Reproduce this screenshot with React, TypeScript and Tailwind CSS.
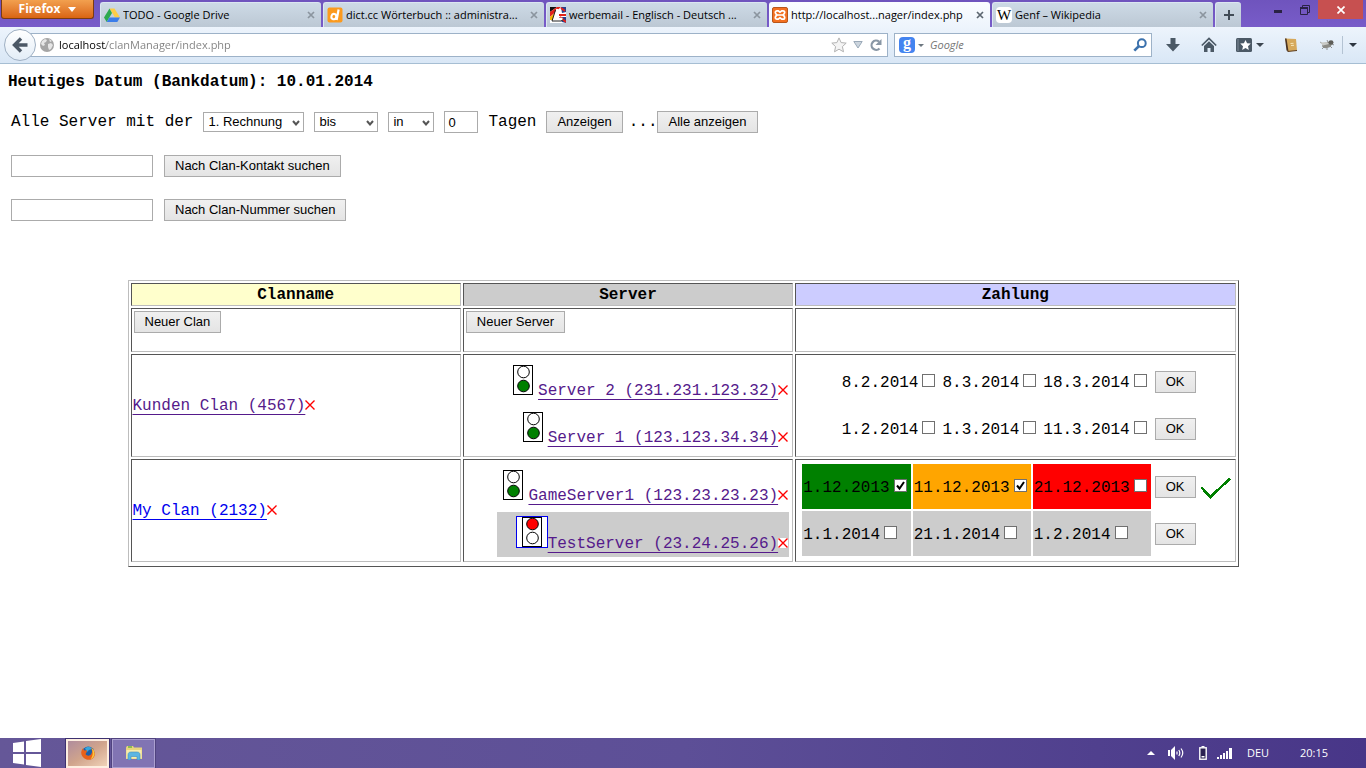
import type { ReactNode } from "react";

const UI = "font-['Open_Sans','Noto_Sans',sans-serif]";
const ARIAL = "font-['Liberation_Sans',Arial,sans-serif]";

/* ---------- favicons ---------- */

function DriveIcon() {
  return (
    <svg viewBox="0 0 16 16" className="size-4 shrink-0" aria-hidden="true">
      <path d="M5.5 1.5h5L16 10.5h-5z" fill="#fccd48" />
      <path d="M5.5 1.5 8 6 2.7 15 0 10.5z" fill="#2da94f" />
      <path d="M5.3 10.5H16L13.3 15H2.7z" fill="#3b7de9" />
    </svg>
  );
}

function DictIcon() {
  return (
    <svg viewBox="0 0 16 16" className="size-4 shrink-0" aria-hidden="true">
      <rect x="0.5" y="0.5" width="15" height="15" rx="2" fill="#fb9a1e" />
      <ellipse cx="6.8" cy="9.6" rx="2.4" ry="2.7" fill="none" stroke="#fff" strokeWidth="2" transform="rotate(15 6.8 9.6)" />
      <path d="M11.6 2.5 9.6 13" stroke="#fff" strokeWidth="2.2" />
    </svg>
  );
}

function LeoIcon() {
  return (
    <svg viewBox="0 0 16 16" className="size-4 shrink-0" aria-hidden="true">
      <rect width="16" height="16" fill="#fff" />
      <path d="M0 0h7L0 5z" fill="#111" />
      <path d="M7 0h4L0 10V5z" fill="#e2231a" />
      <path d="M0 10 5 6 3 13H0z" fill="#f6b800" />
      <path d="M11 0h5v5l-4 1z" fill="#25408f" />
      <path d="M9 10h7v6l-4-1z" fill="#25408f" />
      <path d="M9 8h7M11 1l4 3M10 10l6 5" stroke="#e2231a" strokeWidth="2" />
      <path d="M7.500 2 4.500 12h8" stroke="#fff" strokeWidth="2.600" fill="none" />
      <path d="M5.500 3 2 14h9.500l1.500-1.500" stroke="#222" strokeWidth="1" fill="none" />
    </svg>
  );
}

function XamppIcon() {
  return (
    <svg viewBox="0 0 16 16" className="size-4 shrink-0" aria-hidden="true">
      <rect x="0.5" y="0.5" width="15" height="15" rx="1.5" fill="#f37021" stroke="#b8561b" />
      <path
        d="M5 3.800h1.200L8 5.200l1.800-1.400H11c1 0 1.700.7 1.700 1.700 0 1-.7 1.700-1.700 2.500 1 .800 1.700 1.500 1.700 2.500s-.7 1.700-1.700 1.700H9.800L8 10.800l-1.800 1.400H5c-1 0-1.700-.7-1.700-1.700 0-1 .7-1.700 1.700-2.500-1-.800-1.700-1.500-1.700-2.500S4 3.800 5 3.800z"
        fill="none"
        stroke="#fff"
        strokeWidth="1.700"
      />
      <path d="M5.500 8h5" stroke="#fff" strokeWidth="1.500" />
    </svg>
  );
}

function WikipediaIcon() {
  return (
    <span className="flex size-4 shrink-0 items-center justify-center rounded-sm bg-white font-['Liberation_Serif',serif] text-[15px] leading-4 text-black">
      W
    </span>
  );
}

/* ---------- browser chrome ---------- */

type TabProps = { icon: ReactNode; title: string; active?: boolean };

function Tab({ icon, title, active }: TabProps) {
  return (
    <div
      className={
        active
          ? "flex h-[25px] w-[221px] min-w-0 items-center rounded-t-[3px] bg-linear-to-b from-[#fbfdff] to-[#edf4fc] px-[3px]"
          : "flex h-[25px] w-[221px] min-w-0 items-center rounded-t-[3px] border-t border-l border-[#dbe6f1] bg-linear-to-b from-[#cddae6] to-[#bcc8d4] px-[3px]"
      }
    >
      {icon}
      <button type="button" className="ml-[3px] min-w-0 flex-1 truncate text-left text-[11px] leading-5 text-black">
        {title}
      </button>
      <button type="button" aria-label="Tab schließen" className="flex w-[14px] shrink-0 justify-center">
        <svg viewBox="0 0 8 8" className="size-2" aria-hidden="true">
          <path d="M1 1l6 6M7 1 1 7" stroke={active ? "#5c6670" : "#8b959f"} strokeWidth="1.7" />
        </svg>
      </button>
    </div>
  );
}

function TabStrip() {
  return (
    <div className="flex h-[27px] items-start bg-linear-to-b from-[#6f54bd] to-[#785cc9]">
      <button
        type="button"
        className="mr-[6px] ml-px flex h-[19px] w-[93px] shrink-0 items-center justify-center gap-2 rounded-b-[3px] border border-t-0 border-[#7a3b12] bg-linear-to-b from-[#f2a04e] to-[#d96410] text-[12px] leading-4 font-bold text-white"
      >
        Firefox
        <svg viewBox="0 0 8 5" className="h-[5px] w-2" aria-hidden="true">
          <path d="M0 0h8L4 5z" fill="#fff" />
        </svg>
      </button>
      <div className="flex min-w-0 items-end gap-[2px] self-end">
        <Tab icon={<DriveIcon />} title="TODO - Google Drive" />
        <Tab icon={<DictIcon />} title="dict.cc Wörterbuch :: administra..." />
        <Tab icon={<LeoIcon />} title="werbemail - Englisch - Deutsch ..." />
        <Tab icon={<XamppIcon />} title="http://localhost...nager/index.php" active />
        <Tab icon={<WikipediaIcon />} title="Genf – Wikipedia" />
        <button
          type="button"
          aria-label="Neuer Tab"
          className="flex h-[25px] w-[26px] shrink-0 items-center justify-center rounded-t-[3px] border-t border-l border-[#dbe6f1] bg-linear-to-b from-[#cddae6] to-[#bcc8d4]"
        >
          <svg viewBox="0 0 10 10" className="size-[10px]" aria-hidden="true">
            <path d="M5 0v10M0 5h10" stroke="#414c57" strokeWidth="2" />
          </svg>
        </button>
      </div>
      <div className="mr-[3px] ml-auto flex h-[19px] shrink-0 items-center">
        <button type="button" aria-label="Minimieren" className="flex h-full w-[26px] items-center justify-center pt-1">
          <svg viewBox="0 0 8 3" className="h-[3px] w-2" aria-hidden="true">
            <path d="M0 0h8v3H0z" fill="#2a2245" />
          </svg>
        </button>
        <button type="button" aria-label="Verkleinern" className="flex h-full w-[27px] items-center justify-center">
          <svg viewBox="0 0 10 10" className="size-[10px]" aria-hidden="true">
            <path d="M2.5 2V.5h7v7H8M.5 2.5h7v7h-7z" fill="none" stroke="#2a2245" />
            <path d="M0 3h8" stroke="#2a2245" strokeWidth="2" />
          </svg>
        </button>
        <button type="button" aria-label="Schließen" className="flex h-full w-[45px] items-center justify-center bg-[#c75050]">
          <svg viewBox="0 0 8 8" className="size-2" aria-hidden="true">
            <path d="M.5.5l7 7M7.5.5l-7 7" stroke="#fff" strokeWidth="1.7" />
          </svg>
        </button>
      </div>
    </div>
  );
}

function NavBar() {
  return (
    <div className="flex h-[37px] items-center border-b border-[#a6bed3] bg-linear-to-b from-[#edf4fc] to-[#d9e7f6] pl-1">
      <button
        type="button"
        aria-label="Zurück"
        className="z-10 flex size-8 shrink-0 items-center justify-center rounded-full border border-[#9fb0c3] bg-linear-to-b from-white to-[#e3edf7]"
      >
        <svg viewBox="0 0 16 16" className="size-4" aria-hidden="true">
          <path d="M9 1.5 2.5 8 9 14.5M3 8h12.5" fill="none" stroke="#4c5866" strokeWidth="3.4" />
        </svg>
      </button>
      <div className="-ml-2 flex h-6 min-w-0 flex-1 items-center border border-[#9db2c8] bg-white pr-1 pl-[11px]">
        <svg viewBox="0 0 14 14" className="size-[14px] shrink-0" aria-hidden="true">
          <circle cx="7" cy="7" r="7" fill="#a5a5a5" />
          <path d="M2 3l3-2 2 1-1 2-2 1 1 2-2 1-2-2zM8 6l3-1 2 2-2 4-2 1-1-3zM9 1l3 2-2 1z" fill="#e6e6e6" />
        </svg>
        <input
          type="text"
          aria-label="Adresse"
          defaultValue="localhost/clanManager/index.php"
          className="ml-[5px] min-w-0 flex-1 bg-[linear-gradient(90deg,#000_47px,#808080_47px)] bg-clip-text text-[11px] leading-5 text-transparent outline-none"
        />
        <button type="button" aria-label="Lesezeichen" className="shrink-0">
          <svg viewBox="0 0 16 16" className="size-4" aria-hidden="true">
            <path
              d="M8 .9l2.1 4.7 5.1.5-3.8 3.5 1.1 5.2L8 12.200 3.500 14.800l1.100-5.200L.8 6.100l5.100-.5z"
              fill="#f4f4f4"
              stroke="#b3b3b3"
            />
          </svg>
        </button>
        <button type="button" aria-label="Verlauf" className="ml-[6px] shrink-0">
          <svg viewBox="0 0 10 8" className="h-2 w-[10px]" aria-hidden="true">
            <path d="M.8.5h8.400L5 7z" fill="#ccd5de" stroke="#9aa9b8" />
          </svg>
        </button>
        <button type="button" aria-label="Neu laden" className="ml-[6px] shrink-0">
          <svg viewBox="0 0 14 14" className="size-[14px]" aria-hidden="true">
            <path d="M10.500 10.400A4.600 4.600 0 1 1 10 3.600" fill="none" stroke="#8997a5" strokeWidth="2.200" />
            <path d="M12.500 1v6h-6z" fill="#8997a5" />
          </svg>
        </button>
      </div>
      <div className="ml-[6px] flex h-6 w-[258px] min-w-0 items-center border border-[#9db2c8] bg-white pr-1 pl-1">
        <span className="flex size-4 shrink-0 items-start justify-center overflow-hidden rounded-sm bg-[#4484f0] font-['Liberation_Serif',serif] text-[16px] leading-3 font-bold text-white">
          g
        </span>
        <svg viewBox="0 0 6 3" className="ml-[3px] h-[3px] w-[6px] shrink-0" aria-hidden="true">
          <path d="M0 0h6L3 3z" fill="#6d7780" />
        </svg>
        <input
          type="search"
          aria-label="Suche"
          placeholder="Google"
          className="ml-[6px] min-w-0 flex-1 text-[11px] leading-5 italic outline-none placeholder:text-[#757575]"
        />
        <button type="button" aria-label="Suchen" className="shrink-0">
          <svg viewBox="0 0 14 14" className="size-[14px]" aria-hidden="true">
            <circle cx="8.800" cy="5.200" r="3.900" fill="none" stroke="#3c72ad" strokeWidth="2" />
            <path d="M6 8 1.300 12.700" stroke="#3c72ad" strokeWidth="2.600" />
          </svg>
        </button>
      </div>
      <div className="ml-3 flex shrink-0 items-center pr-[9px]">
        <button type="button" aria-label="Downloads" className="flex w-[18px] justify-center">
          <svg viewBox="0 0 14 14" className="size-[14px]" aria-hidden="true">
            <path d="M4.500 0h5v6H14l-7 7.500L0 6h4.500z" fill="#4b5966" />
          </svg>
        </button>
        <button type="button" aria-label="Startseite" className="ml-[18px] flex w-[18px] justify-center">
          <svg viewBox="0 0 16 16" className="size-4" aria-hidden="true">
            <path d="M.8 8.500 8 1.500l7.200 7" fill="none" stroke="#4b5966" strokeWidth="1.700" />
            <path d="M3 9l5-4.800L13 9v6H9.500v-4h-3v4H3z" fill="#4b5966" />
          </svg>
        </button>
        <button type="button" aria-label="Lesezeichen verwalten" className="ml-[18px] flex items-center gap-1">
          <svg viewBox="0 0 16 14" className="h-[14px] w-4" aria-hidden="true">
            <rect width="16" height="14" rx="1.500" fill="#4b5966" />
            <path d="M2 1v12" stroke="#7d8996" strokeWidth="1" />
            <path d="M9.500 2l1.600 3.300 3.700.3-2.800 2.600.8 3.800-3.300-2-3.300 2 .8-3.800L4.200 5.600l3.700-.3z" fill="#fff" />
          </svg>
          <svg viewBox="0 0 8 4" className="h-1 w-2" aria-hidden="true">
            <path d="M0 0h8L4 4z" fill="#3c4650" />
          </svg>
        </button>
        <button type="button" aria-label="Wörterbuch" className="ml-[19px] flex w-4 justify-center">
          <svg viewBox="0 0 14 14" className="size-[14px]" aria-hidden="true">
            <path d="M1 .5 12 1l1 11.500-9 1z" fill="#d6a95c" />
            <path d="M1 .5 2.500.6 4.500 13.300 2.500 12.500z" fill="#4a3220" />
            <path d="M3.500 13.500l9.500-1" stroke="#5a3b1c" />
            <path d="M6.500 5.500l3-.2M7 7.500l3-.2" stroke="#f7e6b8" />
          </svg>
        </button>
        <button type="button" aria-label="Firebug" className="ml-5 flex w-4 justify-center">
          <svg viewBox="0 0 16 14" className="h-[14px] w-4" aria-hidden="true">
            <path d="M5 9l-2 2M8 9.500V12M11 8l2 2M4 6 1 4M9 4 8 2M13 6l2 1" stroke="#6a6a66" strokeWidth="0.700" />
            <ellipse cx="8" cy="7" rx="5" ry="3" fill="#8b8b85" transform="rotate(-18 8 7)" />
            <ellipse cx="12" cy="4.500" rx="2.500" ry="2.200" fill="#5d5d58" />
            <path d="M1 4.500l7-.500 2 2-6 1.500z" fill="#c9cac6" />
          </svg>
        </button>
        <span className="ml-[7px] h-[18px] w-px bg-[#b4c3d3]" />
        <button type="button" aria-label="Mehr" className="ml-[6px]">
          <svg viewBox="0 0 8 4" className="h-1 w-2" aria-hidden="true">
            <path d="M0 0h8L4 4z" fill="#2d3640" />
          </svg>
        </button>
      </div>
    </div>
  );
}

/* ---------- page controls ---------- */

function Button({ children, type = "button" }: { children: ReactNode; type?: "button" | "submit" }) {
  return (
    <button
      type={type}
      className={`${ARIAL} h-[22px] shrink-0 border border-[#ababab] bg-linear-to-b from-[#f0f0f0] to-[#e4e4e4] px-[10px] text-[13px] leading-5 whitespace-nowrap text-black`}
    >
      {children}
    </button>
  );
}

function Select({ label, options, width }: { label: string; options: string[]; width: string }) {
  return (
    <span className={`relative flex h-5 ${width}`}>
      <select
        aria-label={label}
        className={`${ARIAL} w-full appearance-none border border-[#ababab] bg-white pr-3 pl-1 text-[13px] leading-4 text-black`}
      >
        {options.map((o) => (
          <option key={o}>{o}</option>
        ))}
      </select>
      <svg viewBox="0 0 8 6" className="pointer-events-none absolute top-2 right-1 h-[6px] w-2" aria-hidden="true">
        <path d="M1 1l3 3.500L7 1" fill="none" stroke="#555" strokeWidth="2" />
      </svg>
    </span>
  );
}

function TextBox({ label, width, value }: { label: string; width: string; value?: string }) {
  return (
    <input
      type="text"
      aria-label={label}
      defaultValue={value}
      className={`${ARIAL} h-[22px] border border-[#ababab] bg-white px-[3px] text-[13px] leading-5 text-black ${width}`}
    />
  );
}

function DeleteMark() {
  return (
    <button type="button" aria-label="Löschen" className="inline-block align-baseline">
      <svg viewBox="0 0 10 10" className="size-[10px] bg-white" aria-hidden="true">
        <path d="M.500.500l9 9M9.500.500l-9 9" stroke="#f00" strokeWidth="1.400" />
      </svg>
    </button>
  );
}

function TrafficLight({ on }: { on: "green" | "red" }) {
  return (
    <svg
      viewBox="0 0 30 30"
      className={on === "red" ? "box-content inline size-[30px] border border-[#00e] bg-white align-baseline" : "inline size-[30px] align-baseline"}
      role="img"
      aria-label={on === "red" ? "Rot" : "Grün"}
    >
      <rect x="5.500" y="0.500" width="19" height="29" fill="#fff" stroke="#000" />
      <circle cx="15.500" cy="7" r="5.800" fill={on === "red" ? "#f00" : "#fff"} stroke="#000" />
      <circle cx="15.500" cy="21" r="5.800" fill={on === "green" ? "#008000" : "#fff"} stroke="#000" />
    </svg>
  );
}

function TextLink({ children, visited = true }: { children: ReactNode; visited?: boolean }) {
  return (
    <a
      href="#"
      className={
        visited
          ? "text-[#551a8b] underline decoration-1 underline-offset-[4px] [text-decoration-skip-ink:none]"
          : "text-[#0000ee] underline decoration-1 underline-offset-[4px] [text-decoration-skip-ink:none]"
      }
    >
      {children}
    </a>
  );
}

type Server = { name: string; light: "green" | "red"; highlight?: boolean };

function ServerTable({ servers }: { servers: Server[] }) {
  return (
    <table className="ml-auto border-separate border-spacing-[2px]">
      <tbody>
        {servers.map((s) => (
          <tr key={s.name} className={s.highlight ? "bg-[#cccccc]" : ""}>
            <td className="h-[45px] p-px text-right align-middle whitespace-nowrap">
              <TrafficLight on={s.light} />
              <TextLink>{s.name}</TextLink>
              <DeleteMark />
            </td>
          </tr>
        ))}
      </tbody>
    </table>
  );
}

type Due = { date: string; bg?: string; checked?: boolean };

function DateCell({ due }: { due: Due }) {
  return (
    <td className={`h-[45px] px-px pt-[3px] pb-px align-middle whitespace-nowrap ${due.bg ?? ""}`}>
      <label>
        {due.date}
        <span className="relative mr-[3px] ml-1 inline-flex">
          <input
            type="checkbox"
            defaultChecked={due.checked}
            className="peer size-[13px] appearance-none border border-[#707070] bg-white"
          />
          <svg
            viewBox="0 0 13 13"
            className="pointer-events-none absolute top-0 left-0 hidden size-[13px] peer-checked:block"
            aria-hidden="true"
          >
            <path d="M3 6.500l2.500 3L10 3" fill="none" stroke="#000" strokeWidth="2" />
          </svg>
        </span>
      </label>
    </td>
  );
}

function PaymentTable({ rows }: { rows: { dues: Due[]; done?: boolean }[] }) {
  return (
    <table className="mb-px ml-auto border-separate border-spacing-[2px]">
      <tbody>
        {rows.map((r) => (
          <tr key={r.dues[0].date}>
            {r.dues.map((d) => (
              <DateCell key={d.date} due={d} />
            ))}
            <td className="px-[2px] py-px">
              <span className="flex">
                <Button type="submit">OK</Button>
              </span>
            </td>
            <td className="w-8 p-px">
              {r.done && (
                <svg viewBox="0 0 30 30" className="size-[30px]" shapeRendering="crispEdges" role="img" aria-label="Bezahlt">
                  <path d="M.500 15.500 9.500 25 29 6.500" fill="none" stroke="#008000" strokeWidth="2.600" />
                </svg>
              )}
            </td>
          </tr>
        ))}
      </tbody>
    </table>
  );
}

const CELL = "border border-t-[#555] border-l-[#555] border-r-[#bdbdbd] border-b-[#bdbdbd] p-px";

function ClanTable() {
  return (
    <table className="mx-auto mt-[59px] w-full max-w-[1111px] table-fixed border-separate border-spacing-[2px] border border-t-[#bdbdbd] border-r-[#555] border-b-[#555] border-l-[#bdbdbd] pb-[2px]">
      <colgroup>
        <col className="w-[30%]" />
        <col className="w-[30%]" />
        <col className="w-[40%]" />
      </colgroup>
      <thead>
        <tr>
          <th className={`${CELL} h-[23px] bg-[#ffffcc]`}>Clanname</th>
          <th className={`${CELL} h-[23px] bg-[#cccccc]`}>Server</th>
          <th className={`${CELL} h-[23px] bg-[#ccccff]`}>Zahlung</th>
        </tr>
      </thead>
      <tbody>
        <tr>
          <td className={`${CELL} h-[44px] align-top`}>
            <div className="m-px flex">
              <Button>Neuer Clan</Button>
            </div>
          </td>
          <td className={`${CELL} h-[44px] align-top`}>
            <div className="m-px flex">
              <Button>Neuer Server</Button>
            </div>
          </td>
          <td className={`${CELL} h-[44px]`} />
        </tr>
        <tr>
          <td className={`${CELL} h-[103px]`}>
            <TextLink>Kunden Clan (4567)</TextLink>
            <DeleteMark />
          </td>
          <td className={`${CELL} h-[103px]`}>
            <ServerTable
              servers={[
                { name: "Server 2 (231.231.123.32)", light: "green" },
                { name: "Server 1 (123.123.34.34)", light: "green" },
              ]}
            />
          </td>
          <td className={`${CELL} h-[103px]`}>
            <PaymentTable
              rows={[
                { dues: [{ date: "8.2.2014" }, { date: "8.3.2014" }, { date: "18.3.2014" }] },
                { dues: [{ date: "1.2.2014" }, { date: "1.3.2014" }, { date: "11.3.2014" }] },
              ]}
            />
          </td>
        </tr>
        <tr>
          <td className={`${CELL} h-[103px]`}>
            <TextLink visited={false}>My Clan (2132)</TextLink>
            <DeleteMark />
          </td>
          <td className={`${CELL} h-[103px]`}>
            <ServerTable
              servers={[
                { name: "GameServer1 (123.23.23.23)", light: "green" },
                { name: "TestServer (23.24.25.26)", light: "red", highlight: true },
              ]}
            />
          </td>
          <td className={`${CELL} h-[103px]`}>
            <PaymentTable
              rows={[
                {
                  dues: [
                    { date: "1.12.2013", bg: "bg-[#008000]", checked: true },
                    { date: "11.12.2013", bg: "bg-[#ffa500]", checked: true },
                    { date: "21.12.2013", bg: "bg-[#ff0000]" },
                  ],
                  done: true,
                },
                {
                  dues: [
                    { date: "1.1.2014", bg: "bg-[#cccccc]" },
                    { date: "21.1.2014", bg: "bg-[#cccccc]" },
                    { date: "1.2.2014", bg: "bg-[#cccccc]" },
                  ],
                },
              ]}
            />
          </td>
        </tr>
      </tbody>
    </table>
  );
}

/* ---------- taskbar ---------- */

function Taskbar() {
  return (
    <footer className={`${UI} flex h-[30px] items-center bg-linear-to-r from-[#655798] via-[#5d4f97] to-[#483688] text-[11px] leading-4 text-white`}>
      <button type="button" aria-label="Start" className="ml-[13px] shrink-0">
        <svg viewBox="0 0 28 28" className="size-7" aria-hidden="true">
          <path d="M0 4l11-1.600V13H0zM13 2.100 28 0v13H13zM0 15h11v10.600L0 24zM13 15h15v13l-15-2.100z" fill="#fff" />
        </svg>
      </button>
      <button
        type="button"
        aria-label="Firefox"
        className="ml-[25px] flex h-[29px] w-[43px] shrink-0 items-center justify-center border-2 border-[#fdeee0] bg-linear-to-br from-[#b08c9c] via-[#d0a48c] to-[#f0d2b8] outline outline-[#3d3170]"
      >
        <svg viewBox="0 0 14 14" className="size-[14px]" aria-hidden="true">
          <circle cx="7.300" cy="6.500" r="6" fill="#1c5fa8" />
          <path d="M4 2.500C6 0 10 .5 11 3l-3 1-2 2z" fill="#37a6dc" />
          <path d="M1.500 2.500 3.500 4.500 6 4.300 5.500 6.500 4.500 8C6 10.500 9.500 10 10.500 7.500c1-2 .5-4-.5-5.500 3 1.500 4.500 5 3.500 8-1.500 3.500-5 4.500-8 3.500C1 12-.5 8 .5 5z" fill="#e8611a" />
          <path d="M10.500 2c2.500 1.500 3.700 5 2.500 8-.8 1.800-2 2.800-3.500 3.300 2.500-3 3-7.300 1-11.300z" fill="#fbc83b" />
        </svg>
      </button>
      <button
        type="button"
        aria-label="Explorer"
        className="ml-[3px] flex h-[29px] w-[43px] shrink-0 items-center justify-center border border-[#aba0d0] bg-[#8174b3] outline outline-[#50437f]"
      >
        <svg viewBox="0 0 16 14" className="h-[14px] w-4" aria-hidden="true">
          <path d="M0 1.500 1 0h6l1 1.500h8V13H0z" fill="#e9d57c" />
          <path d="M.500 4h15v8.500H.500z" fill="#f8ecae" />
          <path d="M2 1h4" stroke="#4fae3a" strokeWidth="1.200" />
          <path d="M2 14V9c0-2 1-3 3-3h6c2 0 3 1 3 3v5h-3v-3.500H5V14z" fill="#5db6e2" stroke="#3d8fc0" strokeWidth="0.600" />
        </svg>
      </button>
      <div className="ml-auto flex shrink-0 items-center">
        <svg viewBox="0 0 8 4" className="h-1 w-2" role="img" aria-label="Ausgeblendete Symbole">
          <path d="M4 0l4 4H0z" fill="#fff" />
        </svg>
        <svg viewBox="0 0 16 14" className="ml-[13px] h-[14px] w-4" role="img" aria-label="Lautstärke">
          <path d="M0 4h2v6H0zM3 4l4-4v14L3 10z" fill="#fff" />
          <path d="M9 5.500v3M10.800 4q2 3 0 6M13 2.500q3.500 4.500 0 9" fill="none" stroke="#fff" strokeWidth="1.200" />
        </svg>
        <svg viewBox="0 0 8 14" className="ml-[15px] h-[14px] w-2" role="img" aria-label="Akku">
          <path d="M2.500 0h3v1h-3z" fill="#fff" />
          <rect x="0.800" y="1.800" width="6.400" height="11.400" fill="#2a2050" stroke="#fff" strokeWidth="1.400" />
          <path d="M2.500 10h3v1.500h-3z" fill="#fff" />
        </svg>
        <svg viewBox="0 0 15 11" className="ml-[10px] h-[11px] w-[15px]" role="img" aria-label="Netzwerk">
          <path d="M0 9h2v2H0zM3 7h2v4H3zM6 5h2v6H6zM9 3h2v8H9zM12 0h3v11h-3z" fill="#fff" />
        </svg>
        <span className="ml-[15px] w-[53px]">DEU</span>
        <time className="w-[66px]">20:15</time>
      </div>
    </footer>
  );
}

export default function App() {
  return (
    <div className="flex min-h-screen flex-col bg-white">
      <header className={UI}>
        <TabStrip />
        <NavBar />
      </header>
      <main className="flex-1 px-2 pt-[9px] font-['Liberation_Mono','Courier_New',monospace] text-[16px] leading-[18px] text-black">
        <h1 className="font-bold">Heutiges Datum (Bankdatum): 10.01.2014</h1>
        <div className="mt-5 flex flex-col gap-[22px] pl-[3px]">
          <form className="flex flex-wrap items-center gap-[10px]">
            <span>Alle Server mit der</span>
            <Select label="Rechnung" options={["1. Rechnung", "2. Rechnung", "3. Rechnung"]} width="w-[101px]" />
            <Select label="Zeitraum" options={["bis", "genau"]} width="w-16" />
            <Select label="Richtung" options={["in", "vor"]} width="w-[46px]" />
            <TextBox label="Anzahl Tage" width="w-[34px]" value="0" />
            <span>Tagen</span>
            <span className="flex items-center">
              <Button type="submit">Anzeigen</Button>
              <span className="ml-[6px]">...</span>
              <Button>Alle anzeigen</Button>
            </span>
          </form>
          <form className="flex items-center gap-[11px]">
            <TextBox label="Clan-Kontakt" width="w-[142px]" />
            <Button type="submit">Nach Clan-Kontakt suchen</Button>
          </form>
          <form className="flex items-center gap-[11px]">
            <TextBox label="Clan-Nummer" width="w-[142px]" />
            <Button type="submit">Nach Clan-Nummer suchen</Button>
          </form>
        </div>
        <ClanTable />
      </main>
      <Taskbar />
    </div>
  );
}
